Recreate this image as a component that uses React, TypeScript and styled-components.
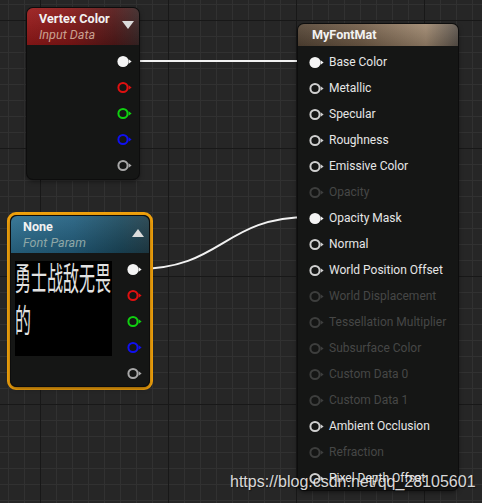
import React from 'react';
import styled, { createGlobalStyle } from 'styled-components';

const GlobalStyle = createGlobalStyle`
  html, body {
    margin: 0;
    padding: 0;
  }
  body {
    background: #262626;
    overflow: hidden;
    font-family: Roboto, "Noto Sans", sans-serif;
  }
`;

//styles
const Graph = styled.div`
  position: relative;
  width: 482px;
  height: 503px;
  overflow: hidden;
  background-color: #262626;
  background-image:
    linear-gradient(to right, #181818 1px, transparent 1px),
    linear-gradient(to bottom, #181818 1px, transparent 1px),
    linear-gradient(to right, #313131 1px, transparent 1px),
    linear-gradient(to bottom, #313131 1px, transparent 1px);
  background-size: 128px 128px, 128px 128px, 16px 16px, 16px 16px;
  background-position: 40px 20px, 40px 20px, 8px 4px, 8px 4px;
`;

const Wires = styled.svg`
  position: absolute;
  left: 0;
  top: 0;
  width: 482px;
  height: 503px;
  pointer-events: none;
`;

const Placed = styled.div<{ $x: number; $y: number }>`
  position: absolute;
  left: ${p => p.$x}px;
  top: ${p => p.$y}px;
`;

const SelectionFrame = styled.div`
  border: 3px solid #f2a20c;
  border-radius: 9px;
  padding: 1px;
  background: #1a1a1a;
`;

const Node = styled.div<{ $w: number; $h: number }>`
  width: ${p => p.$w}px;
  height: ${p => p.$h}px;
  display: flex;
  flex-direction: column;
  background: #151615;
  border-radius: 6px;
  box-shadow: 0 0 0 1px #0d0d0d, 0 2px 5px rgba(0, 0, 0, 0.55);
  overflow: hidden;
`;

const headerFills = {
  input: 'linear-gradient(90deg, #9a1a1a 0%, #861717 40%, #561a1a 78%, #3c2828 100%)',
  param: 'linear-gradient(90deg, #2c6f90 0%, #236080 45%, #1c4a5e 80%, #22404c 100%)',
  result: 'linear-gradient(90deg, #574737 0%, #745f4a 40%, #a08970 80%, #5e564e 100%)',
};

const Header = styled.div<{ $kind: keyof typeof headerFills; $h: number; $pad: number }>`
  height: ${p => p.$h}px;
  flex: none;
  display: flex;
  justify-content: space-between;
  align-items: flex-start;
  box-sizing: border-box;
  padding: 3px 5px 0 ${p => p.$pad}px;
  background: linear-gradient(180deg, rgba(255, 255, 255, 0.07), rgba(0, 0, 0, 0.18)),
    ${p => headerFills[p.$kind]};
`;

const Title = styled.div`
  font: bold 12.6px/15px Roboto, sans-serif;
  color: #f2f2f2;
`;

const Subtitle = styled.div<{ $tone: string }>`
  margin-top: 1px;
  font: italic 12.6px/15px Roboto, sans-serif;
  color: ${p => p.$tone};
`;

const Arrow = styled.svg`
  display: block;
  margin-top: 10px;
`;

const Body = styled.div`
  flex: 1;
  display: flex;
  flex-direction: row;
`;

const Outputs = styled.div`
  margin-left: auto;
  display: flex;
  flex-direction: column;
  align-items: flex-end;
  padding: 3px 7px 0 0;
`;

const Inputs = styled.div`
  display: flex;
  flex-direction: column;
  padding: 3px 0 0 11px;
`;

const PinRow = styled.div`
  height: 26px;
  display: flex;
  align-items: center;
`;

const InputRow = styled(PinRow)<{ $off?: boolean }>`
  gap: 5px;
  font: 12px/15px Roboto, sans-serif;
  color: ${p => (p.$off ? '#464746' : '#e6e6e6')};
  white-space: nowrap;
`;

const PinIcon = styled.svg`
  display: block;
  flex: none;
`;

const Preview = styled.div`
  width: 97px;
  height: 95px;
  margin: 8px 0 0 4px;
  background: #000;
  overflow: hidden;
`;

const PreviewText = styled.div`
  width: 97px;
  font: 16px/20.5px "Noto Sans CJK SC", sans-serif;
  color: #e2e2e2;
  transform-origin: top left;
  transform: translateY(-5px) scaleY(2);
`;

const Watermark = styled.div`
  position: absolute;
  left: 230px;
  top: 473px;
  font: 16px/18px "Liberation Sans", Arial, sans-serif;
  color: rgba(236, 236, 236, 0.92);
  text-shadow: 1px 1px 1px rgba(0, 0, 0, 0.45);
  white-space: nowrap;
`;

//pin glyph
function Pin({ color, linked }: { color: string; linked?: boolean }) {
  return (
    <PinIcon width="15" height="13" viewBox="0 0 15 13">
      {linked ? (
        <circle cx="6" cy="6.5" r="5.6" fill={color} />
      ) : (
        <circle cx="6" cy="6.5" r="4.6" fill="none" stroke={color} strokeWidth="2" />
      )}
      <polygon points="11.6,4.2 14.6,6.5 11.6,8.8" fill={color} />
    </PinIcon>
  );
}

function CollapseArrow({ up }: { up?: boolean }) {
  return (
    <Arrow width="12" height="8" viewBox="0 0 12 8">
      <polygon points={up ? '0,8 12,8 6,0' : '0,0 12,0 6,8'} fill="#dcdcdc" />
    </Arrow>
  );
}

const channelPins = [
  { color: '#f4f4f4', linked: true },
  { color: '#e01010' },
  { color: '#10d010' },
  { color: '#1010f0' },
  { color: '#a8a8a8' },
];

const materialInputs = [
  { name: 'Base Color', linked: true },
  { name: 'Metallic' },
  { name: 'Specular' },
  { name: 'Roughness' },
  { name: 'Emissive Color' },
  { name: 'Opacity', off: true },
  { name: 'Opacity Mask', linked: true },
  { name: 'Normal' },
  { name: 'World Position Offset' },
  { name: 'World Displacement', off: true },
  { name: 'Tessellation Multiplier', off: true },
  { name: 'Subsurface Color', off: true },
  { name: 'Custom Data 0', off: true },
  { name: 'Custom Data 1', off: true },
  { name: 'Ambient Occlusion' },
  { name: 'Refraction', off: true },
  { name: 'Pixel Depth Offset' },
];

function OutputPins() {
  return (
    <Outputs>
      {channelPins.map((pin, i) => (
        <PinRow key={i}>
          <Pin color={pin.color} linked={pin.linked} />
        </PinRow>
      ))}
    </Outputs>
  );
}

export default function App() {
  return (
    <>
      <GlobalStyle />
      <Graph>
        <Wires viewBox="0 0 482 503">
          <line x1="128" y1="61" x2="310" y2="61" stroke="#f2f2f2" strokeWidth="2" />
          <path
            d="M137,269 C223,269 223,217 310,217"
            fill="none"
            stroke="#f2f2f2"
            strokeWidth="2"
          />
        </Wires>

        <Placed $x={27} $y={8}>
          <Node $w={112} $h={171}>
            <Header $kind="input" $h={37} $pad={12}>
              <div>
                <Title>Vertex Color</Title>
                <Subtitle $tone="#c9a090">Input Data</Subtitle>
              </div>
              <CollapseArrow />
            </Header>
            <Body>
              <OutputPins />
            </Body>
          </Node>
        </Placed>

        <Placed $x={7} $y={212}>
          <SelectionFrame>
            <Node $w={138} $h={170}>
              <Header $kind="param" $h={37} $pad={12}>
                <div>
                  <Title>None</Title>
                  <Subtitle $tone="#8fa7a6">Font Param</Subtitle>
                </div>
                <CollapseArrow up />
              </Header>
              <Body>
                <Preview>
                  <PreviewText>勇士战敌无畏的</PreviewText>
                </Preview>
                <OutputPins />
              </Body>
            </Node>
          </SelectionFrame>
        </Placed>

        <Placed $x={298} $y={24}>
          <Node $w={160} $h={466}>
            <Header $kind="result" $h={22} $pad={14}>
              <Title>MyFontMat</Title>
            </Header>
            <Inputs>
              {materialInputs.map(input => (
                <InputRow key={input.name} $off={input.off}>
                  <Pin
                    color={input.linked ? '#f4f4f4' : input.off ? '#3d3e3d' : '#cfcfcf'}
                    linked={input.linked}
                  />
                  {input.name}
                </InputRow>
              ))}
            </Inputs>
          </Node>
        </Placed>

        <Watermark>https://blog.csdn.net/qq_28105601</Watermark>
      </Graph>
    </>
  );
}
